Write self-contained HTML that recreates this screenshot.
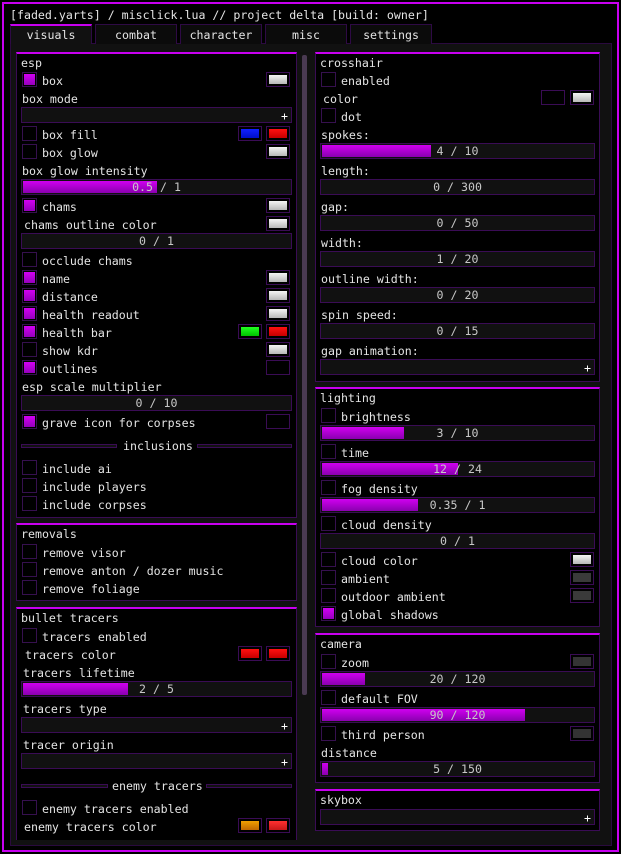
<!DOCTYPE html>
<html><head><meta charset="utf-8"><style>
*{margin:0;padding:0;box-sizing:border-box}
body{width:621px;height:854px;background:#000;position:relative;overflow:hidden;font:11.6px "DejaVu Sans Mono","Liberation Mono",monospace;color:#e4e4e4}
div{position:absolute}
.frame{left:2px;top:2px;width:617px;height:850px;border:2px solid #c800f0}
.cont{left:10px;top:43px;width:602px;height:803px;background:#111;border:1px solid #2a0a3e}
.tab{top:24px;height:20px;background:#0b0b0b;border:1px solid #2e0a45;border-bottom:none;text-align:center;line-height:21px}
.tab.on{background:#111;border-top:2px solid #c800f0;line-height:19px}
.sec{background:#000;border:1px solid #3a0c55;border-top:2px solid #c800f0}
.t{line-height:14px;white-space:pre}
.cb{width:15px;height:15px;border:1px solid #36104f;background:#000}
.cb.on{background:linear-gradient(#d800f8,#9000b8);box-shadow:inset 0 0 0 1px #000}
.sw{width:24px;height:15px;border:1px solid #3a0c55;background:#000}
.sw i{position:absolute;left:2px;top:2px;right:2px;bottom:2px;background:linear-gradient(#f4f4f4,#b8b8b8)}
.sl{height:16px;background:#111;border:1px solid #3a0c55;text-align:center;line-height:15px;color:#c8c8c8}
.sl b{position:absolute;left:1px;top:1px;bottom:1px;background:linear-gradient(#d000f0,#8a00b0)}
.sl span{position:relative}
.dd{height:16px;background:#111;border:1px solid #3a0c55}
.dd:after{content:"+";position:absolute;right:3px;top:1px;line-height:14px;color:#fff}
.dv{height:4px;border:1px solid #3a0c55;background:#111}
</style></head><body>
<div class="frame"></div>
<div class="t" style="left:10px;top:8px">[faded.yarts] / misclick.lua // project delta [build: owner]</div>
<div class="cont"></div>
<div class="tab on" style="left:10px;width:82px">visuals</div>
<div class="tab" style="left:95px;width:82px">combat</div>
<div class="tab" style="left:180px;width:82px">character</div>
<div class="tab" style="left:265px;width:82px">misc</div>
<div class="tab" style="left:350px;width:82px">settings</div>
<div style="left:302px;top:55px;width:5px;height:640px;background:#4a3a52;border-radius:2px"></div>

<!-- left: esp -->
<div class="sec" style="left:16px;top:52px;width:281px;height:466px"></div>
<div class="t" style="left:21px;top:56px">esp</div>
<div class="cb on" style="left:22px;top:72px"></div><div class="t" style="left:42px;top:74px">box</div><div class="sw" style="left:266px;top:72px"><i></i></div>
<div class="t" style="left:22px;top:92px">box mode</div>
<div class="dd" style="left:21px;top:107px;width:271px"></div>
<div class="cb" style="left:22px;top:126px"></div><div class="t" style="left:42px;top:128px">box fill</div>
<div class="sw" style="left:238px;top:126px"><i style="background:linear-gradient(#1020ff,#0010c8)"></i></div><div class="sw" style="left:266px;top:126px"><i style="background:linear-gradient(#ff1010,#c80000)"></i></div>
<div class="cb" style="left:22px;top:144px"></div><div class="t" style="left:42px;top:146px">box glow</div><div class="sw" style="left:266px;top:144px"><i></i></div>
<div class="t" style="left:22px;top:164px">box glow intensity</div>
<div class="sl" style="left:21px;top:179px;width:271px"><b style="width:134px"></b><span>0.5 / 1</span></div>
<div class="cb on" style="left:22px;top:198px"></div><div class="t" style="left:42px;top:200px">chams</div><div class="sw" style="left:266px;top:198px"><i></i></div>
<div class="t" style="left:24px;top:218px">chams outline color</div><div class="sw" style="left:266px;top:216px"><i></i></div>
<div class="sl" style="left:21px;top:233px;width:271px"><span>0 / 1</span></div>
<div class="cb" style="left:22px;top:252px"></div><div class="t" style="left:42px;top:254px">occlude chams</div>
<div class="cb on" style="left:22px;top:270px"></div><div class="t" style="left:42px;top:272px">name</div><div class="sw" style="left:266px;top:270px"><i></i></div>
<div class="cb on" style="left:22px;top:288px"></div><div class="t" style="left:42px;top:290px">distance</div><div class="sw" style="left:266px;top:288px"><i></i></div>
<div class="cb on" style="left:22px;top:306px"></div><div class="t" style="left:42px;top:308px">health readout</div><div class="sw" style="left:266px;top:306px"><i></i></div>
<div class="cb on" style="left:22px;top:324px"></div><div class="t" style="left:42px;top:326px">health bar</div>
<div class="sw" style="left:238px;top:324px"><i style="background:linear-gradient(#20ff20,#00c000)"></i></div><div class="sw" style="left:266px;top:324px"><i style="background:linear-gradient(#ff1010,#c80000)"></i></div>
<div class="cb" style="left:22px;top:342px"></div><div class="t" style="left:42px;top:344px">show kdr</div><div class="sw" style="left:266px;top:342px"><i></i></div>
<div class="cb on" style="left:22px;top:360px"></div><div class="t" style="left:42px;top:362px">outlines</div><div class="sw" style="left:266px;top:360px"></div>
<div class="t" style="left:22px;top:380px">esp scale multiplier</div>
<div class="sl" style="left:21px;top:395px;width:271px"><span>0 / 10</span></div>
<div class="cb on" style="left:22px;top:414px"></div><div class="t" style="left:42px;top:416px">grave icon for corpses</div><div class="sw" style="left:266px;top:414px"></div>
<div class="dv" style="left:21px;top:444px;width:96px"></div><div class="t" style="left:123px;top:439px">inclusions</div><div class="dv" style="left:197px;top:444px;width:95px"></div>
<div class="cb" style="left:22px;top:460px"></div><div class="t" style="left:42px;top:462px">include ai</div>
<div class="cb" style="left:22px;top:478px"></div><div class="t" style="left:42px;top:480px">include players</div>
<div class="cb" style="left:22px;top:496px"></div><div class="t" style="left:42px;top:498px">include corpses</div>

<!-- removals -->
<div class="sec" style="left:16px;top:523px;width:281px;height:78px"></div>
<div class="t" style="left:21px;top:527px">removals</div>
<div class="cb" style="left:22px;top:544px"></div><div class="t" style="left:42px;top:546px">remove visor</div>
<div class="cb" style="left:22px;top:562px"></div><div class="t" style="left:42px;top:564px">remove anton / dozer music</div>
<div class="cb" style="left:22px;top:580px"></div><div class="t" style="left:42px;top:582px">remove foliage</div>

<!-- bullet tracers -->
<div class="sec" style="left:16px;top:607px;width:281px;height:233px;border-bottom:none"></div>
<div class="t" style="left:21px;top:611px">bullet tracers</div>
<div class="cb" style="left:22px;top:628px"></div><div class="t" style="left:42px;top:630px">tracers enabled</div>
<div class="t" style="left:25px;top:648px">tracers color</div>
<div class="sw" style="left:238px;top:646px"><i style="background:linear-gradient(#ff1010,#c80000)"></i></div><div class="sw" style="left:266px;top:646px"><i style="background:linear-gradient(#ff1010,#c80000)"></i></div>
<div class="t" style="left:23px;top:666px">tracers lifetime</div>
<div class="sl" style="left:21px;top:681px;width:271px"><b style="width:105px"></b><span>2 / 5</span></div>
<div class="t" style="left:23px;top:702px">tracers type</div>
<div class="dd" style="left:21px;top:717px;width:271px"></div>
<div class="t" style="left:23px;top:738px">tracer origin</div>
<div class="dd" style="left:21px;top:753px;width:271px"></div>
<div class="dv" style="left:21px;top:784px;width:87px"></div><div class="t" style="left:112px;top:779px">enemy tracers</div><div class="dv" style="left:206px;top:784px;width:86px"></div>
<div class="cb" style="left:22px;top:800px"></div><div class="t" style="left:42px;top:802px">enemy tracers enabled</div>
<div class="t" style="left:24px;top:820px">enemy tracers color</div>
<div class="sw" style="left:238px;top:818px"><i style="background:linear-gradient(#f0a000,#c06800)"></i></div><div class="sw" style="left:266px;top:818px"><i style="background:linear-gradient(#ff3030,#c81818)"></i></div>

<!-- right: crosshair -->
<div class="sec" style="left:315px;top:52px;width:285px;height:330px"></div>
<div class="t" style="left:320px;top:56px">crosshair</div>
<div class="cb" style="left:321px;top:72px"></div><div class="t" style="left:341px;top:74px">enabled</div>
<div class="t" style="left:323px;top:92px">color</div><div class="sw" style="left:541px;top:90px"></div><div class="sw" style="left:570px;top:90px"><i></i></div>
<div class="cb" style="left:321px;top:108px"></div><div class="t" style="left:341px;top:110px">dot</div>
<div class="t" style="left:321px;top:128px">spokes:</div>
<div class="sl" style="left:320px;top:143px;width:275px"><b style="width:109px"></b><span>4 / 10</span></div>
<div class="t" style="left:321px;top:164px">length:</div>
<div class="sl" style="left:320px;top:179px;width:275px"><span>0 / 300</span></div>
<div class="t" style="left:321px;top:200px">gap:</div>
<div class="sl" style="left:320px;top:215px;width:275px"><span>0 / 50</span></div>
<div class="t" style="left:321px;top:236px">width:</div>
<div class="sl" style="left:320px;top:251px;width:275px"><span>1 / 20</span></div>
<div class="t" style="left:321px;top:272px">outline width:</div>
<div class="sl" style="left:320px;top:287px;width:275px"><span>0 / 20</span></div>
<div class="t" style="left:321px;top:308px">spin speed:</div>
<div class="sl" style="left:320px;top:323px;width:275px"><span>0 / 15</span></div>
<div class="t" style="left:321px;top:344px">gap animation:</div>
<div class="dd" style="left:320px;top:359px;width:275px"></div>

<!-- lighting -->
<div class="sec" style="left:315px;top:387px;width:285px;height:240px"></div>
<div class="t" style="left:320px;top:391px">lighting</div>
<div class="cb" style="left:321px;top:408px"></div><div class="t" style="left:341px;top:410px">brightness</div>
<div class="sl" style="left:320px;top:425px;width:275px"><b style="width:82px"></b><span>3 / 10</span></div>
<div class="cb" style="left:321px;top:444px"></div><div class="t" style="left:341px;top:446px">time</div>
<div class="sl" style="left:320px;top:461px;width:275px"><b style="width:136px"></b><span>12 / 24</span></div>
<div class="cb" style="left:321px;top:480px"></div><div class="t" style="left:341px;top:482px">fog density</div>
<div class="sl" style="left:320px;top:497px;width:275px"><b style="width:96px"></b><span>0.35 / 1</span></div>
<div class="cb" style="left:321px;top:516px"></div><div class="t" style="left:341px;top:518px">cloud density</div>
<div class="sl" style="left:320px;top:533px;width:275px"><span>0 / 1</span></div>
<div class="cb" style="left:321px;top:552px"></div><div class="t" style="left:341px;top:554px">cloud color</div><div class="sw" style="left:570px;top:552px"><i></i></div>
<div class="cb" style="left:321px;top:570px"></div><div class="t" style="left:341px;top:572px">ambient</div><div class="sw" style="left:570px;top:570px"><i style="background:#3a3a3a"></i></div>
<div class="cb" style="left:321px;top:588px"></div><div class="t" style="left:341px;top:590px">outdoor ambient</div><div class="sw" style="left:570px;top:588px"><i style="background:#3a3a3a"></i></div>
<div class="cb on" style="left:321px;top:606px"></div><div class="t" style="left:341px;top:608px">global shadows</div>

<!-- camera -->
<div class="sec" style="left:315px;top:633px;width:285px;height:150px"></div>
<div class="t" style="left:320px;top:637px">camera</div>
<div class="cb" style="left:321px;top:654px"></div><div class="t" style="left:341px;top:656px">zoom</div><div class="sw" style="left:570px;top:654px"><i style="background:#333"></i></div>
<div class="sl" style="left:320px;top:671px;width:275px"><b style="width:43px"></b><span>20 / 120</span></div>
<div class="cb" style="left:321px;top:690px"></div><div class="t" style="left:341px;top:692px">default FOV</div>
<div class="sl" style="left:320px;top:707px;width:275px"><b style="width:203px"></b><span>90 / 120</span></div>
<div class="cb" style="left:321px;top:726px"></div><div class="t" style="left:341px;top:728px">third person</div><div class="sw" style="left:570px;top:726px"><i style="background:#333"></i></div>
<div class="t" style="left:321px;top:746px">distance</div>
<div class="sl" style="left:320px;top:761px;width:275px"><b style="width:6px"></b><span>5 / 150</span></div>

<!-- skybox -->
<div class="sec" style="left:315px;top:789px;width:285px;height:42px"></div>
<div class="t" style="left:320px;top:793px">skybox</div>
<div class="dd" style="left:320px;top:809px;width:275px"></div>
</body></html>
